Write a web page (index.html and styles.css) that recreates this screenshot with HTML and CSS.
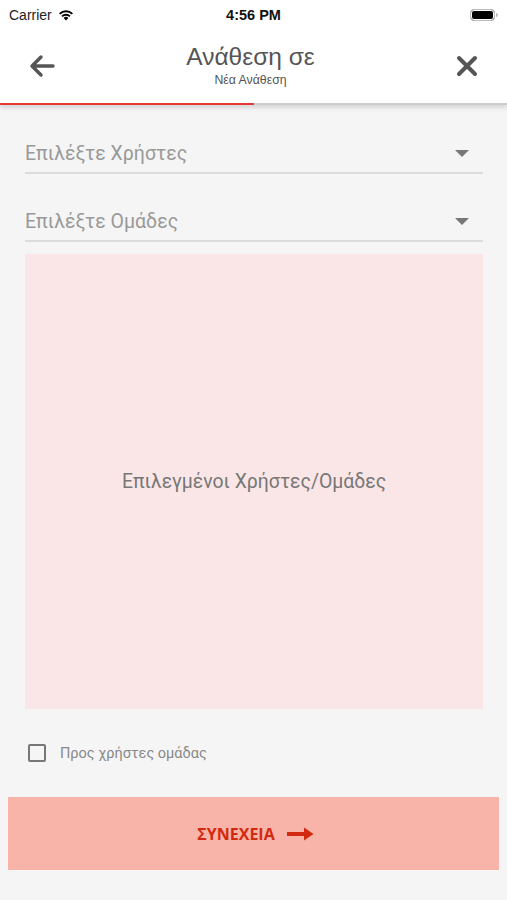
FILE: index.html
```html
<!DOCTYPE html>
<html lang="el">
<head>
<meta charset="utf-8">
<link rel="stylesheet" href="styles.css">
</head>
<body>
<div class="top">
  <div class="status">
    <div class="carrier">Carrier
      <svg class="wifi" width="18" height="13" viewBox="0 0 18 13"><path d="M9 12.5 L6.6 9.9 A3.4 3.4 0 0 1 11.4 9.9 Z" fill="#000"/><path d="M4.4 7.7 A6.5 6.5 0 0 1 13.6 7.7 L12.3 9.1 A4.6 4.6 0 0 0 5.7 9.1 Z" fill="#000"/><path d="M2 5.2 A10 10 0 0 1 16 5.2 L14.7 6.6 A8.1 8.1 0 0 0 3.3 6.6 Z" fill="#000"/></svg>
    </div>
    <div class="time">4:56 PM</div>
    <div class="battery"><span class="cell"></span><span class="tip"></span></div>
  </div>
  <div class="navbar">
    <button class="icon-btn back" aria-label="Πίσω">
      <svg width="28" height="24" viewBox="0 0 28 24"><path d="M25 12 H5 M13 3 L4 12 L13 21" fill="none" stroke="#555" stroke-width="3.4" stroke-linecap="round" stroke-linejoin="round"/></svg>
    </button>
    <div class="titles">
      <div class="title">Ανάθεση σε</div>
      <div class="subtitle">Νέα Ανάθεση</div>
    </div>
    <button class="icon-btn close" aria-label="Κλείσιμο">
      <svg width="22" height="22" viewBox="0 0 22 22"><path d="M3 3 L19 19 M19 3 L3 19" fill="none" stroke="#555" stroke-width="4" stroke-linecap="round"/></svg>
    </button>
  </div>
  <div class="progress"><div class="progress-fill" style="width:50%"></div></div>
</div>

<main class="content">
  <div class="select">
    <span class="placeholder">Επιλέξτε Χρήστες</span>
    <span class="caret"></span>
  </div>
  <div class="select">
    <span class="placeholder">Επιλέξτε Ομάδες</span>
    <span class="caret"></span>
  </div>
  <div class="selected-box">Επιλεγμένοι Χρήστες/Ομάδες</div>
  <label class="check-row">
    <span class="checkbox"></span>
    <span class="check-label">Προς χρήστες ομάδας</span>
  </label>
</main>

<div class="footer">
  <button class="continue">
    <span>ΣΥΝΕΧΕΙΑ</span>
    <svg width="27" height="14" viewBox="0 0 27 14"><path d="M0 5 H17 V0.5 L26.5 7 L17 13.5 V9 H0 Z" fill="#d22a10"/></svg>
  </button>
</div>
</body>
</html>
```
FILE: styles.css
```css
* { box-sizing: border-box; }
html, body { margin: 0; padding: 0; }
body {
  width: 507px;
  height: 900px;
  background: #f5f5f5;
  font-family: Roboto, "Noto Sans", "Liberation Sans", sans-serif;
  overflow: hidden;
}
.top {
  background: #fff;
  position: relative;
  box-shadow: 0 3px 4px rgba(0,0,0,0.12);
}
.status {
  height: 29px;
  display: flex;
  align-items: center;
  justify-content: space-between;
  padding: 0 9px;
  position: relative;
}
.carrier {
  font-family: "Liberation Sans", Arial, sans-serif;
  font-size: 14px;
  color: #222;
  display: flex;
  align-items: center;
  gap: 5px;
}
.time {
  position: absolute;
  left: 0; right: 0;
  text-align: center;
  font-family: "Liberation Sans", Arial, sans-serif;
  font-weight: 700;
  font-size: 14.5px;
  color: #111;
  pointer-events: none;
}
.battery {
  display: flex;
  align-items: center;
}
.battery .cell {
  width: 25px;
  height: 12px;
  border: 1.5px solid #bbb;
  border-radius: 4px;
  background: #000;
  box-shadow: inset 0 0 0 1px #fff;
}
.battery .tip {
  width: 2px;
  height: 4px;
  background: #bbb;
  border-radius: 0 2px 2px 0;
  margin-left: 1px;
}
.navbar {
  height: 74px;
  display: flex;
  align-items: center;
  justify-content: space-between;
  padding: 0 23px 0 25px;
}
.icon-btn {
  background: none;
  border: 0;
  padding: 0;
  display: flex;
  align-items: center;
  justify-content: center;
  width: 34px;
  height: 40px;
}
.titles {
  text-align: center;
  padding-bottom: 2px;
  padding-right: 8px;
}
.title {
  font-family: "Liberation Sans", Arial, sans-serif;
  font-size: 24.5px;
  color: #555;
  line-height: 28px;
}
.subtitle {
  font-family: "Liberation Sans", Arial, sans-serif;
  font-size: 12.3px;
  color: #555;
  line-height: 14px;
  margin-top: 2px;
}
.progress {
  height: 2px;
  background: #ccc;
}
.progress-fill {
  height: 2px;
  background: #e53935;
}
.content {
  padding: 29px 24px 0 25px;
  display: flex;
  flex-direction: column;
}
.select {
  height: 40px;
  display: flex;
  align-items: center;
  justify-content: space-between;
  border-bottom: 2px solid #dcdcdc;
  padding: 0 14px 0 0;
  margin-bottom: 28px;
}
.select + .select { margin-bottom: 12px; }
.placeholder {
  font-size: 19.5px;
  color: #999;
}
.caret {
  width: 0; height: 0;
  border-left: 7px solid transparent;
  border-right: 7px solid transparent;
  border-top: 7px solid #777;
}
.selected-box {
  height: 455px;
  background: #fae6e6;
  display: flex;
  align-items: center;
  justify-content: center;
  font-size: 19.4px;
  color: #777;
}
.check-row {
  display: flex;
  align-items: center;
  gap: 14px;
  margin-top: 35px;
  padding-left: 3px;
  height: 18px;
}
.checkbox {
  width: 18px;
  height: 18px;
  border: 2px solid #777;
  border-radius: 2px;
}
.check-label {
  font-size: 14.5px;
  color: #888;
}
.footer {
  padding: 35px 8px 0 8px;
}
.continue {
  width: 100%;
  height: 73px;
  border: 0;
  background: #f9b4a9;
  display: flex;
  align-items: center;
  justify-content: center;
  gap: 12px;
  font-family: "Open Sans", "Noto Sans", sans-serif;
  font-weight: 700;
  font-size: 16px;
  color: #d22a10;
  padding: 0 0 0 4px;
}
```
